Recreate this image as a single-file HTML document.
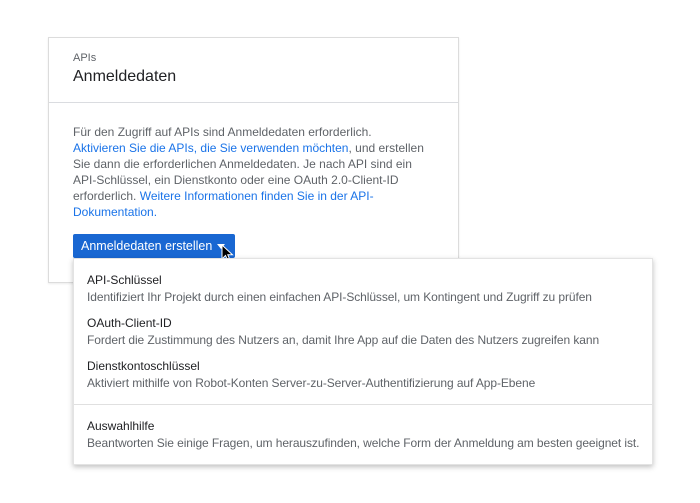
<!DOCTYPE html>
<html><head><style>
body{margin:0;width:700px;height:503px;background:#fff;font-family:"Liberation Sans",sans-serif;position:relative;overflow:hidden}
.card{position:absolute;left:48px;top:37px;width:411px;height:246px;border:1px solid #dcdcdc;box-sizing:border-box;box-shadow:0 1px 2px rgba(0,0,0,.08)}
.hdr{position:absolute;left:0;right:0;top:0;height:64px;border-bottom:1px solid #dadce0}
.small{position:absolute;left:24px;top:14px;font-size:11px;color:#5f6368}
.title{position:absolute;left:24px;top:30px;font-size:16px;color:#202124}
.txt{position:absolute;left:24px;top:86px;font-size:12px;line-height:16px;color:#5f6368;white-space:nowrap}
a{color:#1a73e8;text-decoration:none}
.btn{position:absolute;left:73px;top:234px;width:162px;height:24px;background:#1967d2;border-radius:2px;color:#fff;font-size:12.5px;line-height:24px;box-sizing:border-box;padding-left:8px}
.menu{position:absolute;left:73px;top:258px;width:580px;height:207px;background:#fff;box-shadow:0 2px 5px rgba(0,0,0,.25);border:1px solid #e3e3e3;box-sizing:border-box}
.it{position:absolute;left:13px;font-size:12px;white-space:nowrap}
.t{color:#202124}.d{color:#5f6368;margin-top:3px;letter-spacing:-0.08px}
.div{position:absolute;left:0;right:0;top:145px;border-top:1px solid #e0e0e0}
</style></head><body>
<div class="card">
<div class="hdr"><div class="small">APIs</div><div class="title">Anmeldedaten</div></div>
<div class="txt">Für den Zugriff auf APIs sind Anmeldedaten erforderlich.<br><a>Aktivieren Sie die APIs, die Sie verwenden möchten</a>, und erstellen<br>Sie dann die erforderlichen Anmeldedaten. Je nach API sind ein<br>API-Schlüssel, ein Dienstkonto oder eine OAuth 2.0-Client-ID<br>erforderlich. <a>Weitere Informationen finden Sie in der API-<br>Dokumentation.</a></div>
</div>
<div class="btn">Anmeldedaten erstellen <span style="position:absolute;left:144px;top:10px;width:0;height:0;border-left:4px solid transparent;border-right:4px solid transparent;border-top:5px solid #fff"></span></div>
<svg style="position:absolute;left:221px;top:244px" width="14" height="20" viewBox="0 0 14 20"><path d="M1 1 L1 15 L4.5 11.5 L7 17 L9 16 L6.8 10.8 L11.5 10.8 Z" fill="#000" stroke="#fff" stroke-width="1"/></svg>
<div class="menu">
<div class="it" style="top:14px"><div class="t">API-Schlüssel</div><div class="d">Identifiziert Ihr Projekt durch einen einfachen API-Schlüssel, um Kontingent und Zugriff zu prüfen</div></div>
<div class="it" style="top:57px"><div class="t">OAuth-Client-ID</div><div class="d">Fordert die Zustimmung des Nutzers an, damit Ihre App auf die Daten des Nutzers zugreifen kann</div></div>
<div class="it" style="top:100px"><div class="t">Dienstkontoschlüssel</div><div class="d">Aktiviert mithilfe von Robot-Konten Server-zu-Server-Authentifizierung auf App-Ebene</div></div>
<div class="div"></div>
<div class="it" style="top:160px"><div class="t">Auswahlhilfe</div><div class="d">Beantworten Sie einige Fragen, um herauszufinden, welche Form der Anmeldung am besten geeignet ist.</div></div>
</div>
</body></html>
